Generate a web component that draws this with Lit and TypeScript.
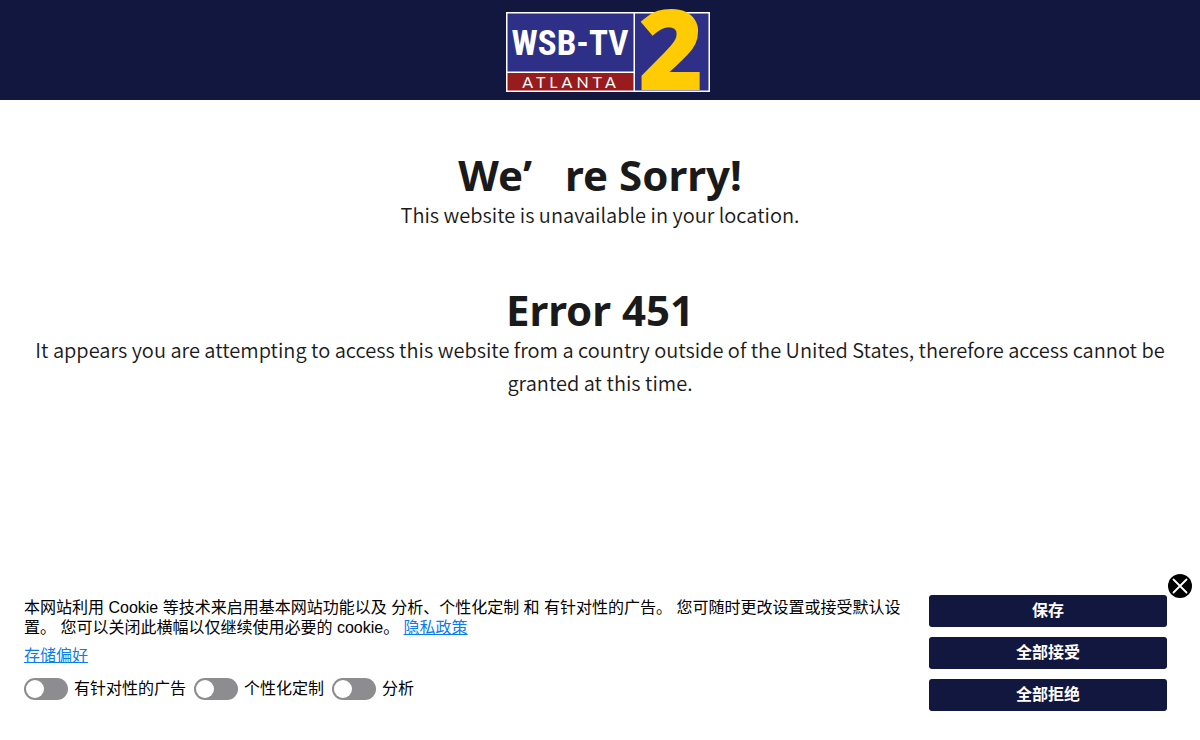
import { LitElement, html, css, svg } from "lit";
import { customElement, property } from "lit/decorators.js";

@customElement("station-logo")
class StationLogo extends LitElement {
  static styles = css`
    :host { display: block; line-height: 0; }
    svg { overflow: visible; }
    .call { font: 700 35px "Liberation Sans Narrow", "Roboto Condensed", "Roboto", sans-serif; fill: #fff; }
    .city { font: 400 16px "Lato", sans-serif; letter-spacing: 4px; fill: #fff; }
    .two { font: 800 112px "Open Sans", sans-serif; fill: #ffcb05; }
  `;
  render() {
    return html`<svg width="204" height="86" viewBox="0 0 204 86" role="img" aria-label="WSB-TV 2 Atlanta">
      ${svg`
        <rect x="0" y="6" width="204" height="80" fill="#fff"/>
        <rect x="1.5" y="7.5" width="126" height="58" fill="#2e3087"/>
        <rect x="1.5" y="67" width="126" height="17.5" fill="#981b1e"/>
        <rect x="129" y="7.5" width="73.5" height="77" fill="#2e3087"/>
        <text class="call" x="64" y="49" text-anchor="middle">WSB-TV</text>
        <text class="city" x="65" y="82" text-anchor="middle">ATLANTA</text>
        <text class="two" x="165" y="84" text-anchor="middle">2</text>
      `}
    </svg>`;
  }
}

@customElement("consent-toggle")
class ConsentToggle extends LitElement {
  @property() label = "";
  static styles = css`
    label { display: flex; align-items: center; gap: 6px; cursor: pointer; }
    input {
      appearance: none; margin: 0; width: 44px; height: 22px; padding: 2px;
      border-radius: 11px; background: #8d8d8f; display: flex; box-sizing: border-box; cursor: pointer;
    }
    input::before { content: ""; width: 18px; height: 18px; border-radius: 50%; background: #fff; }
    input:checked { background: #11173f; justify-content: flex-end; }
  `;
  render() {
    return html`<label><input type="checkbox" role="switch" /><span>${this.label}</span></label>`;
  }
}

@customElement("cookie-banner")
class CookieBanner extends LitElement {
  static styles = css`
    :host {
      display: flex; gap: 24px; align-items: flex-start; box-sizing: border-box;
      padding: 9px 33px 29px 24px; background: #fff; color: #000;
      font: 16px/20px "Liberation Sans", "Noto Sans CJK SC", sans-serif;
    }
    .copy { flex: 1; min-width: 0; padding-top: 3px; }
    p { margin: 0 0 8px; }
    a { color: #0a7cf0; text-decoration: underline; }
    .toggles { display: flex; flex-wrap: wrap; gap: 8px; margin-top: 12px; }
    .actions { display: flex; flex-direction: column; gap: 10px; width: 238px; }
    .action {
      height: 32px; border: 0; border-radius: 3px; background: #11173f; color: #fff; padding: 0;
      font: 700 16px/20px "Liberation Sans", "Noto Sans CJK SC", sans-serif; cursor: pointer;
    }
    .close {
      position: absolute; top: -12px; right: 8px; width: 24px; height: 24px; padding: 0;
      border: 0; border-radius: 50%; background: #000; cursor: pointer; line-height: 0;
    }
  `;
  render() {
    return html`
      <div class="copy">
        <p>本网站利用 Cookie 等技术来启用基本网站功能以及 分析、个性化定制 和 有针对性的广告。 您可随时更改设置或接受默认设置。 您可以关闭此横幅以仅继续使用必要的 cookie。 <a href="#privacy">隐私政策</a></p>
        <a href="#preferences">存储偏好</a>
        <div class="toggles">
          ${["有针对性的广告", "个性化定制", "分析"].map((t) => html`<consent-toggle .label=${t}></consent-toggle>`)}
        </div>
      </div>
      <div class="actions">
        ${["保存", "全部接受", "全部拒绝"].map((t) => html`<button class="action" type="button">${t}</button>`)}
      </div>
      <button class="close" type="button" aria-label="关闭">
        <svg width="24" height="24" viewBox="0 0 24 24"><path d="M5.5 5.5 18.5 18.5M18.5 5.5 5.5 18.5" stroke="#fff" stroke-width="1.8" stroke-linecap="round"/></svg>
      </button>
    `;
  }
}

@customElement("app-root")
class AppRoot extends LitElement {
  static styles = css`
    :host { display: block; min-height: 100vh; background: #fff; color: #1a1a1a; }
    header { background: #11173f; padding: 6px 0 8px; display: flex; justify-content: center; }
    .logo { margin-left: 16px; }
    main { padding: 52px 24px 0; text-align: center; font: 350 20px/33px "Noto Sans CJK SC", sans-serif; }
    section { margin-bottom: 56px; }
    h1 { margin: 0; font: 700 42px/46px "Noto Sans", sans-serif; }
    .mark { display: inline-block; width: 1em; text-align: left; font-family: "Open Sans", sans-serif; }
    p { margin: 0; }
    .banner { position: fixed; left: 0; right: 0; bottom: 0; }
  `;
  render() {
    return html`
      <header><station-logo class="logo"></station-logo></header>
      <main>
        <section>
          <h1>We<span class="mark">’</span>re Sorry!</h1>
          <p>This website is unavailable in your location.</p>
        </section>
        <section>
          <h1>Error 451</h1>
          <p>It appears you are attempting to access this website from a country outside of the United States, therefore access cannot be granted at this time.</p>
        </section>
      </main>
      <cookie-banner class="banner"></cookie-banner>
    `;
  }
}
